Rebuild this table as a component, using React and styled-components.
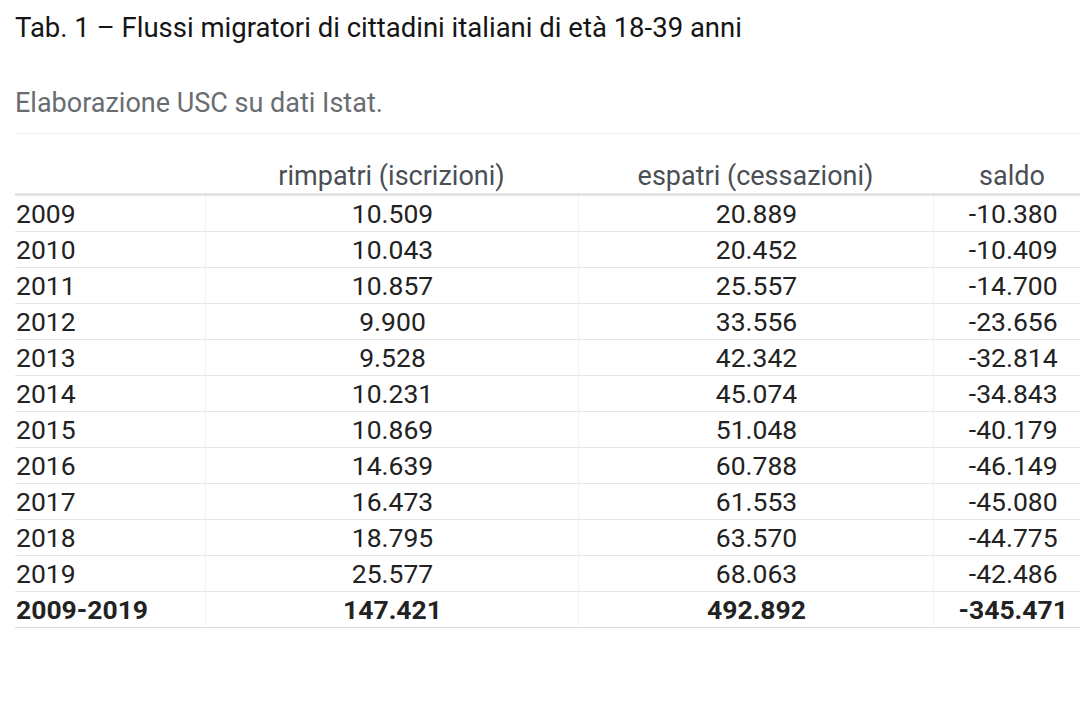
import styled, { createGlobalStyle } from "styled-components";

const GlobalStyle = createGlobalStyle`
  body {
    margin: 0;
    background: #fff;
    font-family: Roboto, "Liberation Sans", sans-serif;
    overflow: hidden;
  }
`;

const Page = styled.div`
  padding: 11px 0 0 15px;
  width: 1080px;
  box-sizing: border-box;
`;

const Title = styled.h1`
  margin: 0;
  font-size: 27.5px;
  font-weight: 400;
  line-height: 34px;
  color: #151515;
`;

const Source = styled.p`
  margin: 41px 0 0;
  font-size: 27px;
  line-height: 34px;
  color: #696d72;
  padding-bottom: 13px;
  border-bottom: 1px solid #eeeeee;
`;

const Table = styled.table`
  width: 1076px;
  border-collapse: collapse;
  table-layout: fixed;
  font-size: 26.5px;
  color: #222;
`;

const HeadCell = styled.th`
  font-weight: 400;
  font-size: 27px;
  color: #4a4f55;
  height: 58px;
  padding: 0 0 1px;
  vertical-align: bottom;
  text-align: ${(p) => (p.$left ? "left" : "center")};
  border-bottom: 3px solid #e2e4e6;
  line-height: 32px;
`;

const Row = styled.tr`
  border-bottom: 1px solid ${(p) => (p.$total ? "#dcdcdc" : "#e4e4e4")};
  font-weight: ${(p) => (p.$total ? 700 : 400)};
`;

const Cell = styled.td`
  height: 35px;
  padding: 0 0 0 ${(p) => (p.$left ? "1px" : "2px")};
  line-height: 30px;
  text-align: ${(p) => (p.$left ? "left" : "center")};
  border-left: ${(p) => (p.$left ? "none" : "1px solid #f0f2f4")};
`;

const rows = [
  ["2009", "10.509", "20.889", "-10.380"],
  ["2010", "10.043", "20.452", "-10.409"],
  ["2011", "10.857", "25.557", "-14.700"],
  ["2012", "9.900", "33.556", "-23.656"],
  ["2013", "9.528", "42.342", "-32.814"],
  ["2014", "10.231", "45.074", "-34.843"],
  ["2015", "10.869", "51.048", "-40.179"],
  ["2016", "14.639", "60.788", "-46.149"],
  ["2017", "16.473", "61.553", "-45.080"],
  ["2018", "18.795", "63.570", "-44.775"],
  ["2019", "25.577", "68.063", "-42.486"],
];

const total = ["2009-2019", "147.421", "492.892", "-345.471"];

export default function App() {
  return (
    <Page>
      <GlobalStyle />
      <Title>Tab. 1 – Flussi migratori di cittadini italiani di età 18-39 anni</Title>
      <Source>Elaborazione USC su dati Istat.</Source>
      <Table>
        <colgroup>
          <col style={{ width: 190 }} />
          <col style={{ width: 373 }} />
          <col style={{ width: 355 }} />
          <col style={{ width: 158 }} />
        </colgroup>
        <thead>
          <tr>
            <HeadCell $left />
            <HeadCell>rimpatri (iscrizioni)</HeadCell>
            <HeadCell>espatri (cessazioni)</HeadCell>
            <HeadCell>saldo</HeadCell>
          </tr>
        </thead>
        <tbody>
          {rows.map((r) => (
            <Row key={r[0]}>
              <Cell $left>{r[0]}</Cell>
              <Cell>{r[1]}</Cell>
              <Cell>{r[2]}</Cell>
              <Cell>{r[3]}</Cell>
            </Row>
          ))}
          <Row $total>
            <Cell $left>{total[0]}</Cell>
            <Cell>{total[1]}</Cell>
            <Cell>{total[2]}</Cell>
            <Cell>{total[3]}</Cell>
          </Row>
        </tbody>
      </Table>
    </Page>
  );
}
